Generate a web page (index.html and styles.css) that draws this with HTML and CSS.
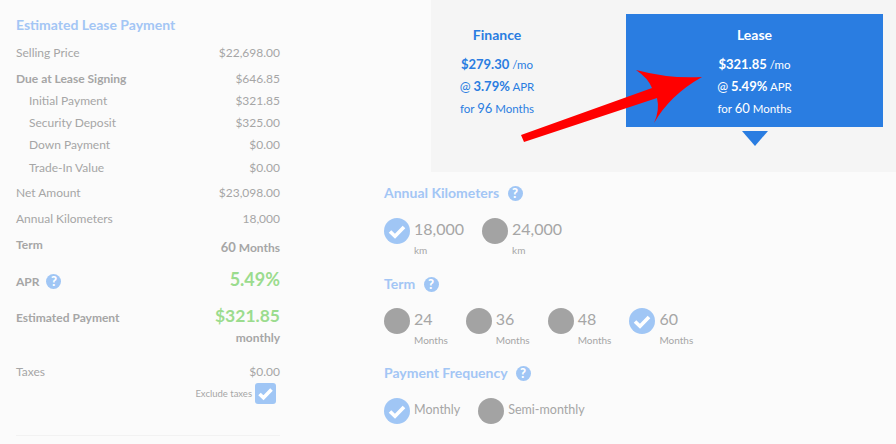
FILE: index.html
```html
<!DOCTYPE html>
<html>
<head>
    <meta charset="UTF-8">
    <title>Estimated Lease Payment</title>
    <link rel="stylesheet" href="styles.css">
</head>
<body>
    <div class="page">
        <!-- Summary column -->
        <div class="summary">
            <h3 class="summary-title">Estimated Lease Payment</h3>
            <div class="row r-price"><span>Selling Price</span><span>$22,698.00</span></div>
            <div class="row r-due"><span class="strong">Due at Lease Signing</span><span>$646.85</span></div>
            <div class="row sub"><span>Initial Payment</span><span>$321.85</span></div>
            <div class="row sub"><span>Security Deposit</span><span>$325.00</span></div>
            <div class="row sub"><span>Down Payment</span><span>$0.00</span></div>
            <div class="row sub r-trade"><span>Trade-In Value</span><span>$0.00</span></div>
            <div class="row r-net"><span>Net Amount</span><span>$23,098.00</span></div>
            <div class="row r-km"><span>Annual Kilometers</span><span>18,000</span></div>
            <div class="row r-term"><span class="strong">Term</span><span class="strong term-value"><b>60</b> Months</span></div>
            <div class="row r-apr">
                <span class="strong apr-label">APR <i class="help">?</i></span>
                <span class="green apr-value">5.49%</span>
            </div>
            <div class="row r-pay">
                <span class="strong">Estimated Payment</span>
                <span class="green pay-value">$321.85</span>
            </div>
            <div class="monthly strong">monthly</div>
            <div class="row r-tax"><span>Taxes</span><span>$0.00</span></div>
            <div class="exclude">
                <span>Exclude taxes</span>
                <span class="checkbox">
                    <svg viewBox="0 0 21 21" width="21" height="21"><path class="tick" d="M4.5 11l4 3.8 8-8.2"/></svg>
                </span>
            </div>
            <div class="divider"></div>
        </div>

        <div class="main">
            <!-- Finance / lease selector -->
            <div class="plans">
                <div class="plan finance">
                    <div class="plan-name">Finance</div>
                    <div class="plan-line"><b>$279.30</b> /mo</div>
                    <div class="plan-line"><span class="big">@</span> <b>3.79%</b> APR</div>
                    <div class="plan-line">for <span class="big">96</span> Months</div>
                </div>
                <div class="lease-col">
                    <div class="plan lease">
                        <div class="plan-name">Lease</div>
                        <div class="plan-line"><b>$321.85</b> /mo</div>
                        <div class="plan-line"><span class="big">@</span> <b>5.49%</b> APR</div>
                        <div class="plan-line">for <span class="big">60</span> Months</div>
                    </div>
                    <div class="pointer"></div>
                </div>
            </div>

            <!-- Options -->
            <h3 class="opt-title first">Annual Kilometers <i class="help">?</i></h3>
            <div class="options">
                <div class="option">
                    <span class="dot on"><svg viewBox="0 0 26 26" width="26" height="26"><path class="tick" d="M6 13.5l5 4.8 9-9.4"/></svg></span>
                    <div><div class="opt-value">18,000</div><div class="opt-unit">km</div></div>
                </div>
                <div class="option">
                    <span class="dot"></span>
                    <div><div class="opt-value">24,000</div><div class="opt-unit">km</div></div>
                </div>
            </div>

            <h3 class="opt-title term-title">Term <i class="help">?</i></h3>
            <div class="options term-options">
                <div class="option">
                    <span class="dot"></span>
                    <div><div class="opt-value">24</div><div class="opt-unit">Months</div></div>
                </div>
                <div class="option">
                    <span class="dot"></span>
                    <div><div class="opt-value">36</div><div class="opt-unit">Months</div></div>
                </div>
                <div class="option">
                    <span class="dot"></span>
                    <div><div class="opt-value">48</div><div class="opt-unit">Months</div></div>
                </div>
                <div class="option">
                    <span class="dot on"><svg viewBox="0 0 26 26" width="26" height="26"><path class="tick" d="M6 13.5l5 4.8 9-9.4"/></svg></span>
                    <div><div class="opt-value">60</div><div class="opt-unit">Months</div></div>
                </div>
            </div>

            <h3 class="opt-title">Payment Frequency <i class="help">?</i></h3>
            <div class="options">
                <div class="option">
                    <span class="dot on"><svg viewBox="0 0 26 26" width="26" height="26"><path class="tick" d="M6 13.5l5 4.8 9-9.4"/></svg></span>
                    <div class="opt-text">Monthly</div>
                </div>
                <div class="option">
                    <span class="dot"></span>
                    <div class="opt-text">Semi-monthly</div>
                </div>
            </div>
        </div>
    </div>

    <!-- Red annotation arrow over the page -->
    <svg class="arrow" viewBox="0 0 896 444" width="896" height="444">
        <path d="M521 135L652 88Q648 78 636 70Q670 79 702 77Q670 95 654 123Q660 110 657 98L524 142Z" fill="#ff0000"/>
    </svg>
</body>
</html>
```

FILE: styles.css
```css
html, body { margin: 0; padding: 0; }
body { width: 896px; height: 444px; overflow: hidden; background: #fbfbfb; font-family: Lato, "Open Sans", sans-serif; font-size: 12px; color: #a6a6a6; }
.page { display: flex; }
h3 { margin: 0; font-size: 14px; font-weight: 700; color: #a3c6f5; }
b { font-weight: 700; }

/* summary */
.summary { width: 264px; margin-left: 16px; padding-top: 16px; }
.summary-title { height: 18px; line-height: 18px; margin-bottom: 10px; }
.row { display: flex; justify-content: space-between; align-items: center; height: 18px; line-height: 18px; }
.sub { padding-left: 13px; margin-top: 4px; }
.r-trade { margin-top: 5px; }
.r-due { margin-top: 8px; }
.r-net { margin-top: 7px; }
.r-km { margin-top: 8px; }
.r-term { margin-top: 8px; }
.strong { font-weight: 700; }
.term-value { padding-top: 4px; }
.term-value b { font-size: 13px; }
.green { color: #9bdc8e; font-weight: 700; }
.r-apr { margin-top: 13px; height: 24px; }
.apr-label { padding-top: 5px; }
.apr-label .help { margin-left: 4px; }
.apr-value { font-size: 18px; }
.r-pay { margin-top: 14px; height: 26px; }
.pay-value { font-size: 17.5px; padding-bottom: 4px; }
.monthly { text-align: right; height: 18px; line-height: 18px; margin-top: -2px; }
.r-tax { margin-top: 16px; }
.exclude { display: flex; justify-content: flex-end; align-items: center; gap: 3px; font-size: 9.5px; padding-right: 4px; margin-top: 2px; }
.checkbox { width: 21px; height: 21px; background: #a0c6f5; border-radius: 3px; display: block; }
.checkbox svg { display: block; }
.divider { border-top: 1px solid #f2f2f2; margin-top: 31px; }
.tick { fill: none; stroke: #fff; stroke-width: 3.6; }

.help { display: inline-block; width: 15px; height: 15px; line-height: 15px; margin-left: 6px; border-radius: 50%; background: #a0c6f5; color: #fff; font-size: 13px; font-weight: 900; font-style: normal; text-align: center; vertical-align: 0; }

/* finance / lease */
.main { width: 512px; margin-left: 104px; }
.plans { display: flex; height: 158px; margin-left: 47px; padding: 14px 13px 0 0; background: #f5f5f5; }
.plan { text-align: center; color: #2a7de1; }
.finance { width: 132px; margin-right: 63px; }
.lease-col { width: 257px; }
.lease { height: 113px; background: #2a7de1; color: #fff; }
.plan-name { font-size: 14px; font-weight: 700; height: 20px; line-height: 20px; padding-top: 11px; margin-bottom: 8px; }
.plan-line { height: 22px; line-height: 22px; font-size: 11.5px; }
.plan-line b { font-size: 13px; }
.big { font-size: 13px; }
.pointer { width: 0; height: 0; margin: 4px auto 0; border-style: solid; border-width: 15px 13px 0 13px; border-color: #2a7de1 transparent transparent transparent; }

/* options */
.opt-title { height: 20px; line-height: 20px; margin-top: 15px; }
.opt-title.first { margin-top: 11px; }
.opt-title.term-title { margin-top: 16px; }
.opt-title .help { margin-left: 5px; }
.options { display: flex; gap: 18px; margin-top: 15px; padding-bottom: 1px; }
.options.term-options { margin-top: 14px; }
.option { display: flex; gap: 4px; }
.dot { flex: none; width: 26px; height: 26px; border-radius: 50%; background: #a3a3a3; }
.dot.on { background: #a0c6f5; }
.dot svg { display: block; }
.opt-value { font-size: 16px; line-height: 22px; }
.opt-unit { font-size: 10px; line-height: 14px; margin-top: 3px; }
.opt-text { font-size: 12.5px; line-height: 24px; }

.arrow { position: absolute; left: 0; top: 0; pointer-events: none; }
```
